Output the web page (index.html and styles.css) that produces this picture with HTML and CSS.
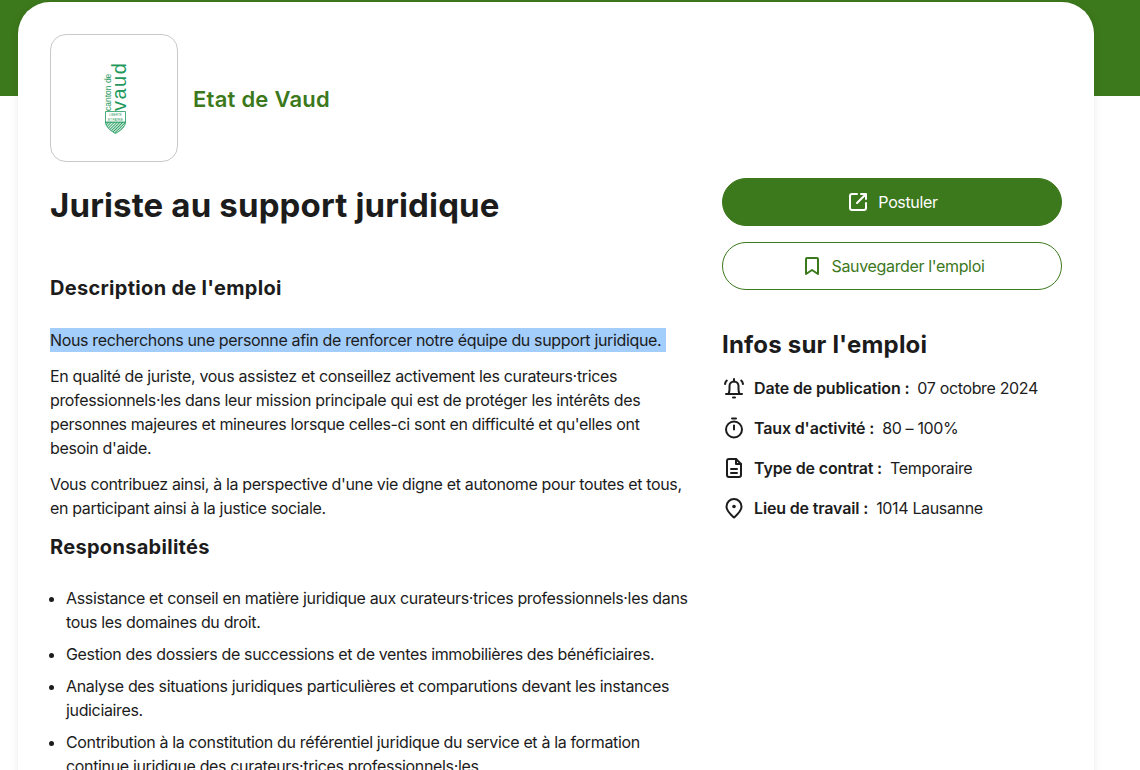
FILE: index.html
```html
<!DOCTYPE html>
<html lang="fr">
<head>
    <meta charset="utf-8">
    <title>Juriste au support juridique</title>
    <link rel="stylesheet" href="styles.css">
</head>
<body>
    <div class="banner"></div>
    <section class="card">
        <div class="company">
            <div class="logo">
                <div class="logo-mark">
                    <div class="logo-words"><span class="logo-small">canton de</span><span class="logo-big">vaud</span></div>
                    <svg class="logo-shield" viewBox="0 0 21 23" width="21" height="23">
                        <defs>
                            <pattern id="hatch" width="2" height="2" patternUnits="userSpaceOnUse" patternTransform="rotate(45)">
                                <rect width="2" height="2" fill="#e3f3ea"/>
                                <rect width="1" height="2" fill="#35a56c"/>
                            </pattern>
                        </defs>
                        <path d="M.5 11H20.500C20.500 16 15 20 10.500 22.500C6 20 .5 16 .5 11Z" fill="url(#hatch)" stroke="#1f9a5c" stroke-width=".8"/>
                        <path d="M.5 .5H20.500V11H.5Z" fill="#fff" stroke="#1f9a5c" stroke-width=".8"/>
                        <text class="logo-motto" x="10.500" y="5">LIBERTÉ</text>
                        <text class="logo-motto" x="10.500" y="9.500">ET PATRIE</text>
                    </svg>
                </div>
            </div>
            <span class="company-name">Etat de Vaud</span>
        </div>
        <div class="columns">
            <main class="main">
                <h1>Juriste au support juridique</h1>
                <h2>Description de l'emploi</h2>
                <p><span class="selected">Nous recherchons une personne afin de renforcer notre équipe du support juridique.</span></p>
                <p>En qualité de juriste, vous assistez et conseillez activement les curateurs·trices professionnels·les dans leur mission principale qui est de protéger les intérêts des personnes majeures et mineures lorsque celles-ci sont en difficulté et qu'elles ont besoin d'aide.</p>
                <p>Vous contribuez ainsi, à la perspective d'une vie digne et autonome pour toutes et tous, en participant ainsi à la justice sociale.</p>
                <h2 class="second">Responsabilités</h2>
                <ul>
                    <li>Assistance et conseil en matière juridique aux curateurs·trices professionnels·les dans tous les domaines du droit.</li>
                    <li>Gestion des dossiers de successions et de ventes immobilières des bénéficiaires.</li>
                    <li>Analyse des situations juridiques particulières et comparutions devant les instances judiciaires.</li>
                    <li>Contribution à la constitution du référentiel juridique du service et à la formation continue juridique des curateurs·trices professionnels·les.</li>
                </ul>
            </main>
            <aside class="side">
                <a class="btn btn-full">
                    <svg viewBox="0 0 24 24" width="24" height="24" fill="none" stroke="currentColor" stroke-width="2" stroke-linecap="round" stroke-linejoin="round"><path d="M11 4H6a2 2 0 0 0-2 2v12a2 2 0 0 0 2 2h12a2 2 0 0 0 2-2v-5"/><path d="M11 13L20 4M15 4h5v5"/></svg>
                    Postuler
                </a>
                <a class="btn btn-line">
                    <svg viewBox="0 0 24 24" width="24" height="24" fill="none" stroke="currentColor" stroke-width="2" stroke-linejoin="round"><path d="M6 5a1 1 0 0 1 1-1h10a1 1 0 0 1 1 1v15l-6-4-6 4Z"/></svg>
                    Sauvegarder l'emploi
                </a>
                <h3>Infos sur l'emploi</h3>
                <div class="info">
                    <svg viewBox="0 0 24 24" width="24" height="24" fill="none" stroke="currentColor" stroke-width="2" stroke-linecap="round" stroke-linejoin="round"><path d="M4 18h16M6.500 18c.7-1.500 1-3 1-5v-3a4.500 4.500 0 0 1 9 0v3c0 2 .3 3.500 1 5"/><path d="M11 21.500h2M12 3v2.500M3 8c.2-1.300.8-2.500 1.800-3.400M21 8c-.2-1.300-.8-2.500-1.800-3.400"/></svg>
                    <b>Date de publication :</b> <span>07 octobre 2024</span>
                </div>
                <div class="info">
                    <svg viewBox="0 0 24 24" width="24" height="24" fill="none" stroke="currentColor" stroke-width="2" stroke-linecap="round"><circle cx="12" cy="13.500" r="8"/><path d="M10 2.500h4M12 9.500v4"/></svg>
                    <b>Taux d'activité :</b> <span>80 – 100%</span>
                </div>
                <div class="info">
                    <svg viewBox="0 0 24 24" width="24" height="24" fill="none" stroke="currentColor" stroke-width="2" stroke-linecap="round" stroke-linejoin="round"><path d="M14 3H7a2 2 0 0 0-2 2v14a2 2 0 0 0 2 2h10a2 2 0 0 0 2-2V8Z"/><path d="M14 3v5h5M9 13h6M9 17h6"/></svg>
                    <b>Type de contrat :</b> <span>Temporaire</span>
                </div>
                <div class="info">
                    <svg viewBox="0 0 24 24" width="24" height="24" fill="none" stroke="currentColor" stroke-width="2" stroke-linejoin="round"><path d="M12 21.500c-1.500-1.500-7.500-6-7.500-11a7.500 7.500 0 0 1 15 0c0 5-6 9.500-7.500 11Z"/><circle cx="12" cy="10.500" r="1.800" fill="currentColor" stroke="none"/></svg>
                    <b>Lieu de travail :</b> <span>1014 Lausanne</span>
                </div>
            </aside>
        </div>
    </section>
</body>
</html>
```

FILE: styles.css
```css
* {
    box-sizing: border-box;
}
html, body {
    height: 770px;
    overflow: hidden;
}
body {
    margin: 0;
    background-color: #fff;
    color: #1c1c1c;
    font-family: Inter, "Liberation Sans", sans-serif;
    font-size: 16px;
    line-height: 24px;
    letter-spacing: -0.35px;
}
.banner {
    height: 96px;
    margin-bottom: -94px;
    background-color: #3c781c;
}
.card {
    width: 1076px;
    margin-left: 18px;
    padding: 32px;
    border-radius: 32px;
    background-color: #fff;
    box-shadow: 0 2px 10px rgba(0, 0, 0, 0.08);
}
.company {
    display: flex;
    align-items: center;
    gap: 15px;
}
.logo {
    display: flex;
    align-items: center;
    justify-content: center;
    width: 128px;
    height: 128px;
    border: 1px solid #c9c9c9;
    border-radius: 16px;
}
.logo-mark {
    display: flex;
    flex-direction: column;
    align-items: center;
    margin-left: 2px;
    margin-bottom: 2px;
}
.logo-words {
    writing-mode: vertical-rl;
    transform: rotate(180deg);
    width: 21px;
    height: 50px;
    color: #1f9a5c;
    font-family: "Liberation Sans", sans-serif;
    letter-spacing: 0;
}
.logo-small {
    display: block;
    font-size: 8.500px;
    line-height: 7px;
}
.logo-big {
    display: block;
    font-size: 20px;
    line-height: 14px;
    letter-spacing: 1.500px;
}
.logo-shield {
    display: block;
}
.logo-motto {
    fill: #1f9a5c;
    font-family: "Liberation Sans", sans-serif;
    font-size: 3px;
    letter-spacing: 0;
    text-anchor: middle;
}
.company-name {
    margin-top: 2px;
    color: #3c781c;
    font-size: 22px;
    font-weight: 600;
    letter-spacing: 0.25px;
}
.columns {
    display: flex;
    gap: 32px;
    margin-top: 16px;
}
.main {
    width: 640px;
    flex: none;
}
.side {
    width: 340px;
    flex: none;
}
h1, h2, h3 {
    font-family: Inter, sans-serif;
    font-weight: 700;
    margin: 0;
}
h1 {
    font-size: 33px;
    line-height: 54px;
    letter-spacing: 0.15px;
    margin-bottom: 41px;
}
h2 {
    font-size: 20px;
    line-height: 30px;
    letter-spacing: 0.3px;
    margin-bottom: 25px;
}
h2.second {
    margin-top: 12px;
    margin-bottom: 24px;
}
h3 {
    font-size: 24px;
    line-height: 36px;
    letter-spacing: 0.2px;
    margin-top: 37px;
    margin-bottom: 13px;
}
p {
    margin: 0 0 12px;
}
.selected {
    display: inline-block;
    padding-right: 5px;
    background-color: #a3cdfb;
}
ul {
    margin: 0;
    padding-left: 16px;
}
li {
    margin-bottom: 8px;
}
.btn {
    display: flex;
    align-items: center;
    justify-content: center;
    gap: 8px;
    height: 48px;
    margin-bottom: 16px;
    border: 1px solid #3c781c;
    border-radius: 24px;
}
.btn-full {
    background-color: #3c781c;
    color: #fff;
}
.btn-line {
    color: #3c781c;
}
.info {
    display: flex;
    align-items: center;
    height: 24px;
    margin-bottom: 16px;
    white-space: pre;
}
.info svg {
    margin-right: 8px;
}
.info b {
    font-weight: 600;
    letter-spacing: -0.15px;
}
.info span {
    margin-left: 8px;
}
```
